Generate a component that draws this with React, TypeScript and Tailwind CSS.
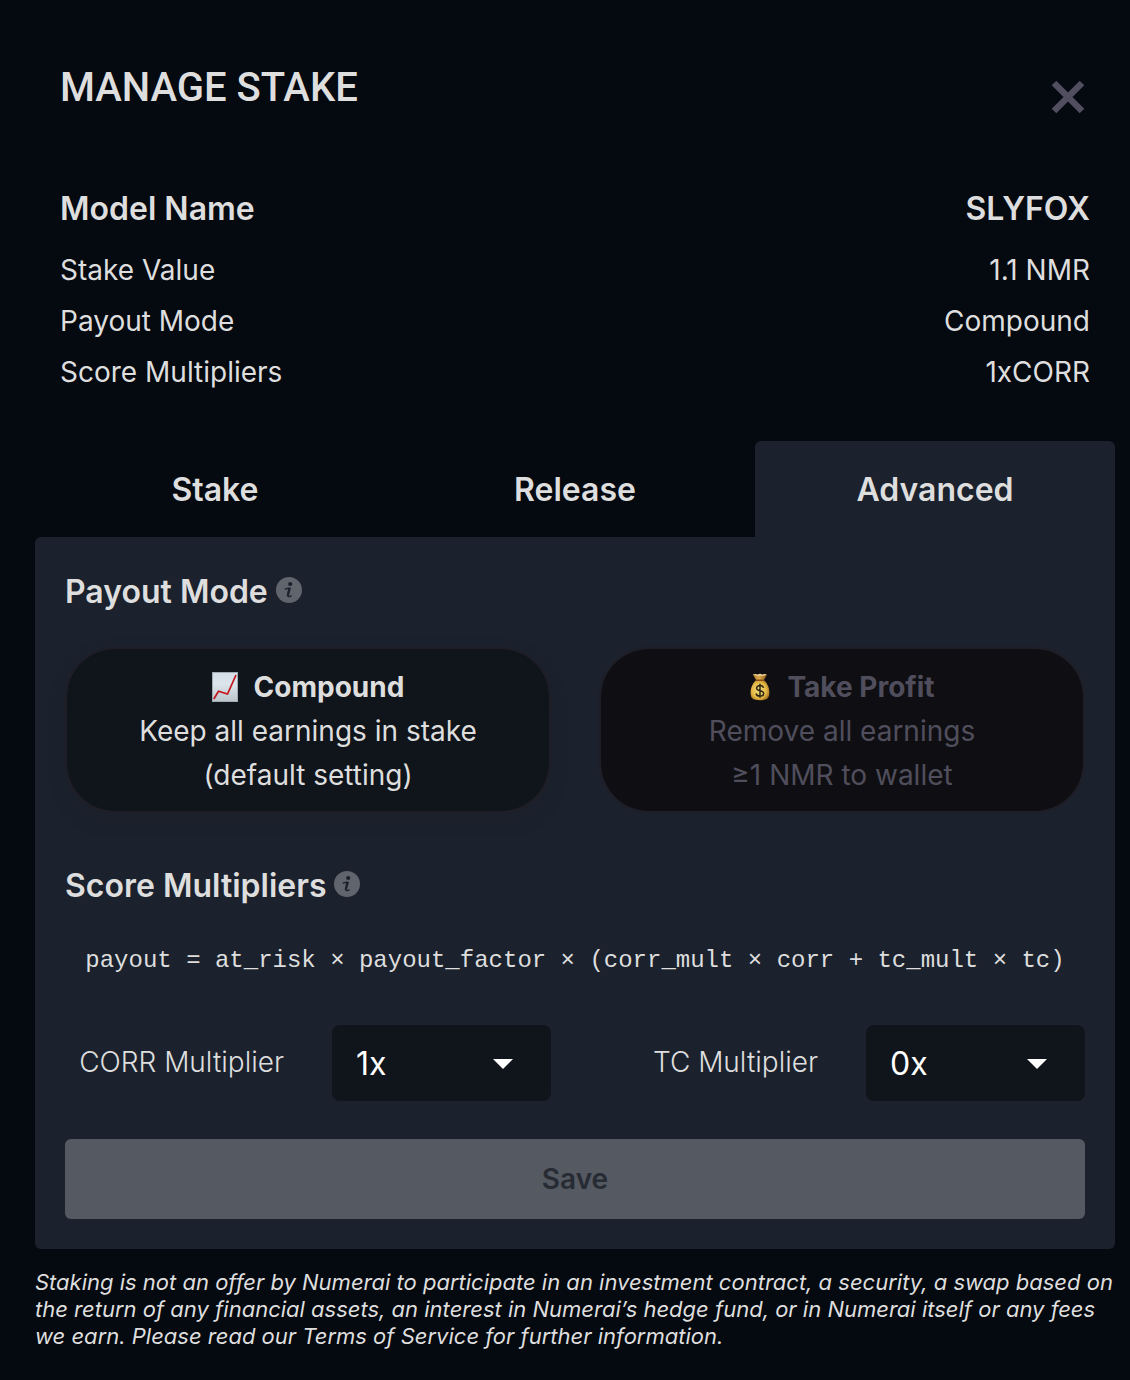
import { useState } from "react";

const details = [
  { label: "Stake Value", value: "1.1 NMR" },
  { label: "Payout Mode", value: "Compound" },
  { label: "Score Multipliers", value: "1xCORR" },
];

const tabs = ["Stake", "Release", "Advanced"];

function InfoIcon() {
  return (
    <svg viewBox="0 0 26 26" className="size-[26px]" aria-hidden="true">
      <circle cx="13" cy="13" r="13" fill="#60646c" />
      <circle cx="14.2" cy="7" r="2.100" fill="#1b222d" />
      <path
        d="M9.300 12.200c1.600-.8 2.900-1.200 4.400-1.100-.3 2-1.600 5-1.900 7.200-.2 1.700 1 1.800 3.400.6"
        fill="none"
        stroke="#1b222d"
        strokeWidth="1.300"
        strokeLinecap="round"
      />
      <path d="M12.100 11.400l2.800-.5-2 7.600-2.200.6z" fill="#1b222d" />
    </svg>
  );
}

function ChartIcon() {
  return (
    <svg viewBox="0 0 26 30" className="h-[30px] w-[26px]" aria-hidden="true">
      <defs>
        <linearGradient id="chartPaper" x1="0" y1="0" x2="0" y2="1">
          <stop offset="0" stopColor="#d3dde6" />
          <stop offset=".4" stopColor="#dde5ec" />
          <stop offset="1" stopColor="#bcc4cc" />
        </linearGradient>
      </defs>
      <rect x=".5" y=".5" width="25" height="29" fill="url(#chartPaper)" stroke="#a3acb5" />
      <path d="M1.800 27 6.500 19.300 15.500 22 24 3" fill="none" stroke="#c3151b" strokeWidth="1.700" />
    </svg>
  );
}

function MoneyBagIcon() {
  return (
    <svg viewBox="0 0 22 28" className="h-7 w-[22px]" aria-hidden="true">
      <defs>
        <radialGradient id="bagFill" cx=".45" cy=".5" r=".62">
          <stop offset="0" stopColor="#f7df7c" />
          <stop offset=".65" stopColor="#e2b542" />
          <stop offset="1" stopColor="#936218" />
        </radialGradient>
        <linearGradient id="bagNeck" x1="0" y1="0" x2="1" y2="0">
          <stop offset="0" stopColor="#a8742a" />
          <stop offset=".45" stopColor="#dca94c" />
          <stop offset="1" stopColor="#845519" />
        </linearGradient>
      </defs>
      <path d="M3.700 1.200 6.500 1l2 .8L11 .7l2.300 1 2.200-.8 2.500.5-3.500 6.400H7.500z" fill="url(#bagNeck)" />
      <path d="M4 1.200 6.500 1l2 .8L11 .7l2.300 1 2.200-.8 2.300.5-2.300 1.200-2.200.3-2.300-.5-2.500.7z" fill="#f0d7a0" />
      <path d="M7.500 7h7c3.600 2.600 5.900 7.600 5.900 12.600 0 5.800-2 7.600-9.400 7.600S1.600 25.400 1.600 19.600C1.600 14.600 3.900 9.600 7.500 7z" fill="url(#bagFill)" />
      <path d="M7.300 7.200h7.400" stroke="#8a4f12" strokeWidth="1.500" strokeLinecap="round" />
      <path d="M14.500 14.800c-.3-1.500-1.700-2.200-3.500-2.200-2 0-3.400 1-3.400 2.600 0 3.600 7.100 1.700 7.100 5.200 0 1.700-1.500 2.700-3.700 2.700-2.100 0-3.600-.9-3.900-2.600M11 10.800v14" fill="none" stroke="#2d2614" strokeWidth="1.500" />
    </svg>
  );
}

function SectionTitle({ text }: { text: string }) {
  return (
    <div className="flex h-10 items-center gap-2">
      <h2 className="text-[32px] leading-10 font-semibold">{text}</h2>
      <button type="button" aria-label={`About ${text}`} className="pb-1">
        <InfoIcon />
      </button>
    </div>
  );
}

function MultiplierSelect({ id, label, initial }: { id: string; label: string; initial: string }) {
  const [value, setValue] = useState(initial);
  return (
    <div className="flex items-center justify-end gap-12">
      <label htmlFor={id} className="pb-[2px] text-[28px] leading-9 font-light whitespace-nowrap">
        {label}
      </label>
      <div className="relative w-[219px]">
        <select
          id={id}
          value={value}
          onChange={(e) => setValue(e.target.value)}
          className="h-[76px] w-full appearance-none rounded-lg bg-[#10141b] px-6 pt-[2px] text-[32px] text-white"
        >
          <option>0x</option>
          <option>1x</option>
        </select>
        <svg
          viewBox="0 0 20 10"
          className="pointer-events-none absolute top-[34px] right-[38px] h-[10px] w-5"
          aria-hidden="true"
        >
          <path d="M0 0h20L10 10z" fill="#fff" />
        </svg>
      </div>
    </div>
  );
}

export default function App() {
  const [tab, setTab] = useState("Advanced");
  const [mode, setMode] = useState("compound");

  const card = "rounded-[48px] pt-4 pb-[14px] text-[28px] leading-[44px] font-normal outline-2 outline-[#1f1e27] ";
  const active = "bg-[#10141b] text-[#dedede] shadow-[0_8px_16px_rgba(30,30,40,0.5)]";
  const inactive = "bg-[#0f0e12] text-[#504e5d]";

  return (
    <main className="min-h-screen bg-[#050910] pt-16 pr-[15px] pb-6 pl-[35px] font-['Inter',sans-serif] text-[#dedede]">
      <header className="flex items-start justify-between pr-[30px] pl-[25px]">
        <h1 className="font-['Roboto',sans-serif] text-[40px] leading-[48px] font-medium">MANAGE STAKE</h1>
        <button type="button" aria-label="Close" className="pt-4">
          <svg viewBox="0 0 34 34" className="size-[34px]" aria-hidden="true">
            <path d="M3 3l28 28M31 3L3 31" stroke="#504e5f" strokeWidth="6.500" />
          </svg>
        </button>
      </header>

      <dl className="mt-[75px] px-[25px]">
        <div className="mb-4 flex justify-between text-[32px] leading-10 font-semibold">
          <dt>Model Name</dt>
          <dd>SLYFOX</dd>
        </div>
        {details.map((d) => (
          <div key={d.label} className="flex justify-between text-[28px] leading-[51px] font-normal">
            <dt>{d.label}</dt>
            <dd>{d.value}</dd>
          </div>
        ))}
      </dl>

      <div role="tablist" className="mt-[43px] grid grid-cols-3">
        {tabs.map((t) => (
          <button
            key={t}
            type="button"
            role="tab"
            aria-selected={tab === t}
            onClick={() => setTab(t)}
            className={
              "h-24 rounded-t-md pt-[2px] text-[32px] font-semibold " +
              (tab === t ? "bg-[#1b222d]" : "bg-transparent")
            }
          >
            {t}
          </button>
        ))}
      </div>

      <section role="tabpanel" className="rounded-md rounded-tr-none bg-[#1b222d] px-[30px] pt-[35px] pb-[30px]">
        <SectionTitle text="Payout Mode" />
        <div className="mt-[37px] grid grid-cols-2 gap-[52px] px-[2px]">
          <button
            type="button"
            aria-pressed={mode === "compound"}
            onClick={() => setMode("compound")}
            className={card + (mode === "compound" ? active : inactive)}
          >
            <span className="flex items-center justify-center gap-4 font-bold">
              <ChartIcon />
              Compound
            </span>
            Keep all earnings in stake
            <br />
            (default setting)
          </button>
          <button
            type="button"
            aria-pressed={mode === "profit"}
            onClick={() => setMode("profit")}
            className={card + (mode === "profit" ? active : inactive)}
          >
            <span className="flex items-center justify-center gap-4 font-bold">
              <MoneyBagIcon />
              Take Profit
            </span>
            Remove all earnings
            <br />
            ≥1 NMR to wallet
          </button>
        </div>

        <div className="mt-[55px]">
          <SectionTitle text="Score Multipliers" />
        </div>
        <p className="mt-[39px] text-center font-['Liberation_Mono',monospace] text-2xl whitespace-nowrap">
          payout = at_risk × payout_factor × (corr_mult × corr + tc_mult × tc)
        </p>
        <div className="mt-12 grid grid-cols-2 gap-12">
          <MultiplierSelect id="corr" label="CORR Multiplier" initial="1x" />
          <MultiplierSelect id="tc" label="TC Multiplier" initial="0x" />
        </div>
        <button
          type="button"
          className="mt-[38px] h-20 w-full rounded-md bg-[#555962] text-[28px] font-semibold text-[#262b34]"
        >
          Save
        </button>
      </section>

      <p className="mt-5 text-[22px] leading-[27px] italic">
        Staking is not an offer by Numerai to participate in an investment contract, a security, a swap based on the
        return of any financial assets, an interest in Numerai’s hedge fund, or in Numerai itself or any fees we earn.
        Please read our Terms of Service for further information.
      </p>
    </main>
  );
}
